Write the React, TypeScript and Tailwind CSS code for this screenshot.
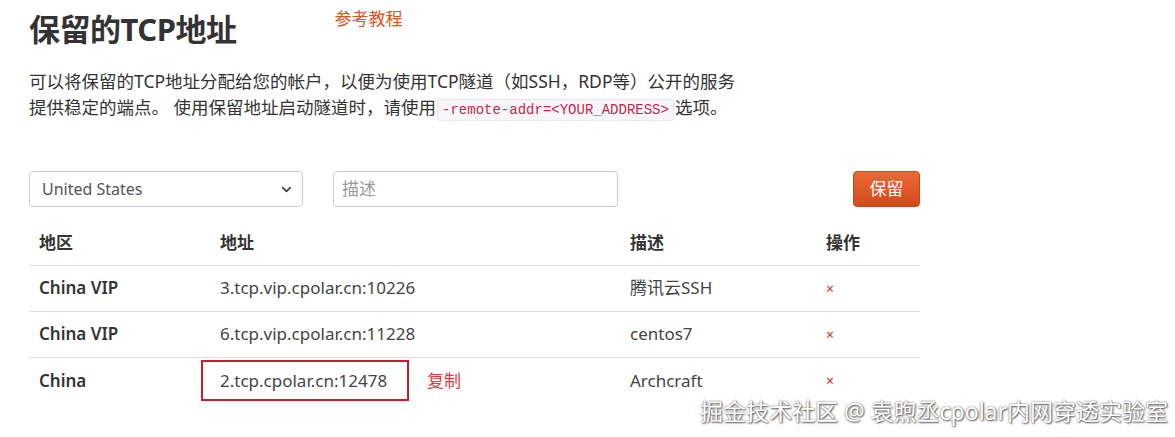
import { ChevronDown } from "lucide-react";

const font = { fontFamily: '"Noto Sans", "Noto Sans CJK SC", sans-serif' };

interface Row {
  region: string;
  address: string;
  desc: string;
  highlight?: boolean;
}

const rows: Row[] = [
  { region: "China VIP", address: "3.tcp.vip.cpolar.cn:10226", desc: "腾讯云SSH" },
  { region: "China VIP", address: "6.tcp.vip.cpolar.cn:11228", desc: "centos7" },
  { region: "China", address: "2.tcp.cpolar.cn:12478", desc: "Archcraft", highlight: true },
];

export default function App() {
  return (
    <div
      className="relative w-[1175px] h-[437px] overflow-hidden bg-white text-[#333] font-['Noto_Sans','Noto_Sans_CJK_SC',sans-serif]"
    >
      <div className="pl-[29px] pt-[10px] w-[920px]">
        <div className="flex items-start">
          <h1 className="text-[31px] font-bold leading-[40px] -mt-[1px] text-[#333] tracking-[-0.5px]">
            保留的TCP地址
          </h1>
          <a className="ml-[98px] text-[17px] leading-[18px] text-[#d9541e]">参考教程</a>
        </div>

        <p className="mt-[19px] text-[17.5px] leading-[26px] text-[#333] w-[740px]">
          可以将保留的TCP地址分配给您的帐户，以便为使用TCP隧道（如SSH，RDP等）公开的服务
          <br />
          提供稳定的端点。 使用保留地址启动隧道时，请使用
          <code className="mx-[1px] px-[4px] py-[2px] rounded-[3px] bg-[#f7f7f9] border border-[#e8e8ee] text-[#c7254e] text-[14px] font-['Liberation_Mono',monospace]">
            -remote-addr=&lt;YOUR_ADDRESS&gt;
          </code>
          选项。
        </p>

        <div className="mt-[48px] flex items-center h-[36px]">
          <div className="w-[274px] h-[36px] border border-[#ccc] rounded-[4px] flex items-center justify-between pl-[12px] pr-[8px] text-[16px] text-[#555]">
            <span>United States</span>
            <ChevronDown size={15} strokeWidth={3} className="text-[#444]" />
          </div>
          <div className="ml-[30px] w-[285px] h-[36px] border border-[#ccc] rounded-[4px] flex items-center pl-[8px] text-[17px] text-[#999]">
            描述
          </div>
          <button className="ml-auto w-[67px] h-[36px] rounded-[4px] bg-gradient-to-b from-[#ec6a35] to-[#d24a1a] border border-[#c8451a] text-white text-[17px]">
            保留
          </button>
        </div>

        <table className="mt-[14px] w-[891px] border-collapse text-[17px]" style={font}>
          <colgroup>
            <col className="w-[181px]" />
            <col className="w-[410px]" />
            <col className="w-[196px]" />
            <col className="w-[104px]" />
          </colgroup>
          <thead>
            <tr className="h-[44px] border-b border-[#ddd] text-left">
              <th className="pl-[10px] font-bold">地区</th>
              <th className="pl-[10px] font-bold">地址</th>
              <th className="pl-[10px] font-bold">描述</th>
              <th className="pl-[10px] font-bold">操作</th>
            </tr>
          </thead>
          <tbody>
            {rows.map((r, i) => (
              <tr key={i} className={`h-[46px] ${i < rows.length - 1 ? "border-b border-[#ddd]" : ""}`}>
                <td className="pl-[10px] font-semibold text-[#333]">{r.region}</td>
                <td className="pl-[10px] text-[#444]">
                  {r.highlight ? (
                    <div className="flex items-center">
                      <span className="-ml-[19px] w-[208px] h-[41px] border-2 border-[#c9202f] flex items-center pl-[17px]">
                        {r.address}
                      </span>
                      <span className="ml-[18px] text-[#e0393e]">复制</span>
                    </div>
                  ) : (
                    r.address
                  )}
                </td>
                <td className="pl-[10px] text-[#444]">{r.desc}</td>
                <td className="pl-[10px] text-[#c9302c] text-[14px]">×</td>
              </tr>
            ))}
          </tbody>
        </table>
      </div>

      <div className="absolute right-[7px] bottom-[13px] text-[23px] leading-[26px] text-white [text-shadow:0_0_2px_#666,1px_1px_2px_#555]">
        掘金技术社区 @ 袁煦丞cpolar内网穿透实验室
      </div>
    </div>
  );
}
